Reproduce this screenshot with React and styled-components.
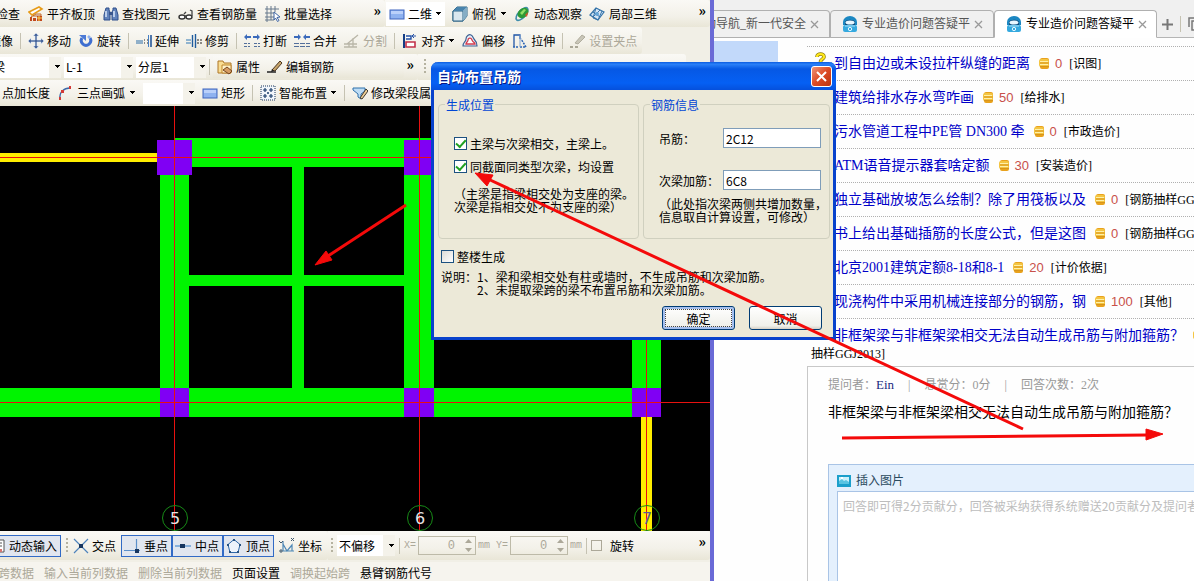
import styled, { createGlobalStyle, css } from 'styled-components';

const GlobalStyle = createGlobalStyle`
  * { box-sizing: border-box; }
  body {
    margin: 0;
    overflow: hidden;
    background: #fff;
    color: #000;
    font: 12px/16px "Liberation Serif", "Noto Sans CJK SC", sans-serif;
  }
  button, input, select, textarea { font: inherit; color: inherit; margin: 0; }
`;

const Desktop = styled.div`
  position: relative;
  display: grid;
  grid-template-columns: minmax(0, 714fr) minmax(0, 480fr);
  height: 100vh;
  overflow: hidden;
`;

/* ---------- drawing program ---------- */

const CadWindow = styled.section`
  display: flex;
  flex-direction: column;
  min-width: 0;
  overflow: hidden;
  background: #ece9d8;
  border-right: 4px solid #6a6ad6;
  font-family: "Noto Sans CJK SC", sans-serif;
`;

const ToolRow = styled.div`
  display: flex;
  flex: none;
  height: ${(p) => p.$h || 26}px;
  overflow: hidden;
  background: #f1efe6;
`;

const Strip = styled.div`
  display: flex;
  align-items: center;
  gap: ${(p) => p.$gap || 7}px;
  flex: ${(p) => (p.$w ? `0 0 ${p.$w}px` : '1 1 0')};
  min-width: 0;
  padding: 0 4px 0 ${(p) => p.$pad || 0}px;
  overflow: hidden;
  white-space: nowrap;
  background: linear-gradient(#faf9f5, #f3f1e9 60%, #e9e6d7);
  border-radius: 0 3px 3px 0;
`;

// first entries run off the left edge of the window
const Scrolled = styled.span`
  display: flex;
  flex: none;
  margin-left: -${(p) => p.$by}px;
`;

const ToolButton = styled.button`
  display: inline-flex;
  align-items: center;
  flex: none;
  gap: ${(p) => p.$gap || 3}px;
  height: 22px;
  padding: 0;
  border: 0;
  background: none;
  white-space: nowrap;
  color: ${(p) => (p.disabled ? '#aca899' : '#000')};
  svg { flex: none; }
  ${(p) => p.$white && css`
    height: 24px;
    padding: 0 3px;
    background: #fff;
  `}
  ${(p) => p.$pressed && css`
    padding: 0 3px 0 2px;
    background: #e1e6ef;
    border: 1px solid #316ac5;
  `}
`;

const Separator = styled.i`
  flex: none;
  width: 1px;
  height: 16px;
  background: #c5c2b2;
`;

const Grip = styled.i`
  flex: none;
  width: 2px;
  height: 16px;
  background: repeating-linear-gradient(#b5b2a0 0 2px, transparent 2px 4px);
`;

const More = styled.button`
  align-self: flex-start;
  margin-left: auto;
  padding: 0;
  border: 0;
  background: none;
  font-size: 14px;
  font-weight: bold;
  line-height: 20px;
`;

const ComboBox = styled.label`
  display: flex;
  align-items: center;
  flex: 0 0 ${(p) => p.$w}px;
  height: 21px;
  background: linear-gradient(90deg, #fff calc(100% - 12px), #f4f2ea 0);
  select {
    flex: 1;
    min-width: 0;
    padding: 0 0 0 2px;
    border: 0;
    outline: 0;
    background: none;
    appearance: none;
    height: 20px;
    line-height: 18px;
  }
`;

const Canvas = styled.div`
  flex: 1;
  min-height: 0;
  overflow: hidden;
  background: #000;
  svg { display: block; }
`;

const SnapBar = styled(ToolRow)`
  height: 31px;
  padding-bottom: 2px;
`;

const CommandBar = styled(ToolRow)`
  height: 19px;
  background: #f6f4ee;
  align-items: flex-end;
  gap: 10px;
  button { height: 16px; }
`;

const Snaps = styled.div`
  display: flex;
`;

const Offsets = styled.div`
  display: flex;
  gap: 6px;
  flex: none;
`;

const Coordinate = styled.label`
  display: flex;
  align-items: center;
  flex: none;
  gap: 2px;
  color: #aca899;
  font: 10px "Liberation Mono", monospace;
`;

const Spinner = styled.span`
  display: flex;
  align-items: center;
  width: 58px;
  height: 19px;
  padding-right: 3px;
  border: 1px solid #bdbaa8;
  input {
    flex: 1;
    min-width: 0;
    padding: 0 10px 0 0;
    border: 0;
    background: none;
    text-align: right;
    font-size: 12px;
    color: #aca899;
  }
`;

const EmptyTick = styled.input`
  appearance: none;
  width: 11px;
  height: 11px;
  border: 1px solid #aca899;
`;

const TickLabel = styled.label`
  display: flex;
  align-items: center;
  gap: 8px;
`;

function Arrow() {
  return <svg width="7" height="4" viewBox="0 0 7 4"><path d="M1 0h5v1H5v1H4v1H3V2H2V1H1z" /></svg>;
}

const glyphs = {
  slab: <><path d="M1 6L11 1L14 3L4 9Z" fill="#fff" stroke="#e69b18" strokeWidth="1.6" /><path d="M3 11L8 8H13V10H5" fill="#d9e7f6" stroke="#c66a24" /><path d="M2 11h2v4H2zM5 12h3v3H5zM9 10h5v5H9z" fill="#c2491c" /><path d="M9 12h5M11 10v5" stroke="#ffd24d" /></>,
  binoculars: <><path d="M3 2h3v2l1 2v8H1V9zM10 2h3l2 7v5H9V6l1-2z" fill="#6384bb" stroke="#2f4f8c" /><path d="M3 5v6M11 5v6" stroke="#dbe7fa" strokeWidth="1.5" /><path d="M6 6h4v3H6z" fill="#39568d" /></>,
  glasses: <><ellipse cx="4" cy="11" rx="3" ry="2" fill="#fff" stroke="#333" strokeWidth="1.4" /><ellipse cx="11" cy="11" rx="3" ry="2" fill="#fff" stroke="#333" strokeWidth="1.4" /><path d="M6 10h3M14 10V5l-2-1M6 8l2-2" fill="none" stroke="#444" strokeWidth="1.3" /></>,
  select: <><path d="M2 0v16M6 0v14M10 0v6M0 3h14M0 7h9M0 11h9M0 14h9" stroke="#67788c" fill="none" /><path d="M9 6l6 5-3 .5 2 3-1.500 1-2-3.500-1.500 2z" fill="#fff" stroke="#3f65a3" /></>,
  move: <path d="M8 0l3 3H9v4h4V5l3 3-3 3V9H9v4h2l-3 3-3-3h2V9H3v2L0 8l3-3v2h4V3H5z" fill="#47659b" stroke="#e4ecf8" strokeWidth=".6" />,
  rotate: <><path d="M4 5a4.700 4.700 0 1 0 8 0" fill="none" stroke="#3f6fd0" strokeWidth="3" /><path d="M1 2h7v6z" fill="#4c7ad6" /><path d="M12 5l-2-2" stroke="#8fb0ee" strokeWidth="2.500" /></>,
  extend: <><path d="M0 8h7M0 10h7" stroke="#2c6ea8" /><path d="M8 7h1M8 10h1M11 7h1M11 10h1" stroke="#222" /><path d="M12.500 2v12" stroke="#447fc5" /><path d="M15 2v12" stroke="#174d93" strokeWidth="1.500" /></>,
  trim: <><path d="M0 7h5M0 10h5" stroke="#2c76b5" /><path d="M6.500 2v12M9.500 1v14" stroke="#1f5c9e" strokeWidth="1.400" /><path d="M11 7h2M14 7h2M11 10h2M14 10h2" stroke="#222" /></>,
  breakup: <><path d="M0 4l3-3v2h4v2H3v2zM16 4l-3-3v2H9v2h4v2z" fill="#3b6abb" /><path d="M0 10.500h6M10 10.500h6M0 13.500h6M10 13.500h6" stroke="#536f9b" strokeDasharray="3 1" /></>,
  merge: <><path d="M7 4L4 1v2H0v2h4v2zM9 4l3-3v2h4v2h-4v2z" fill="#3b6abb" /><path d="M0 10.500h16M0 13.500h16" stroke="#536f9b" strokeDasharray="5 1" /></>,
  split: <><path d="M0 11h13M0 14h13M3 11L14 2M9 14V5M5 14v-4" stroke="#b9b6a8" fill="none" strokeWidth="1.300" /></>,
  align: <><path d="M2 1v14" stroke="#153d86" strokeWidth="2" /><path d="M4 3h5v3H4" fill="#fff" stroke="#2451a6" strokeWidth="1.400" /><path d="M4 9h9v5H4z" fill="#fff" stroke="#c2324a" strokeWidth="1.600" /><path d="M14 3h-4l2-2M10 3l2 2" fill="none" stroke="#2451a6" /></>,
  offset: <><path d="M1 13c0-4 3-4 3-7s3-5 5-4 2 3 3 4 3 3 3 7z" fill="#e6edf7" stroke="#3f6394" strokeWidth="1.200" /><path d="M4 11c0-2 2-2 2-4s3-3 4 0 3 2 3 4z" fill="#fff" stroke="#d33e4f" strokeWidth="1.300" /></>,
  stretch: <><path d="M2 14V2h6v4" fill="none" stroke="#1f55a6" strokeWidth="1.300" /><path d="M1 14h5M8 14h6L9 6" fill="none" stroke="#2a64b5" strokeDasharray="2 1" strokeWidth="1.500" /><path d="M8 2v12" stroke="#7ea4d6" /></>,
  clamp: <><path d="M0 14h3M5 14h3" stroke="#a9a696" strokeWidth="2" /><path d="M5 10L12 2l3 2-7 7z" fill="#c9c6b8" stroke="#b0ad9e" /></>,
  flat: <><rect x="1" y="4" width="14" height="9" fill="#8fb2f0" stroke="#3e65bd" /><path d="M2 5h12v3H2z" fill="#bad0fa" /></>,
  cube: <><path d="M1 5l4-4h10v9l-4 5H1z" fill="#a9c9dc" stroke="#2b6285" /><path d="M1 5h10v10H1z" fill="#d9e7ef" stroke="#2b6285" /><path d="M1 5l4-4h10l-4 4z" fill="#4984ad" /><path d="M11 5l4-4v9l-4 5z" fill="#85adc5" /></>,
  orbit: <><ellipse cx="8" cy="8" rx="8" ry="3.500" transform="rotate(-48 8 8)" fill="none" stroke="#3e8dac" strokeWidth="1.600" /><ellipse cx="9" cy="7" rx="6" ry="4.500" transform="rotate(-40 9 7)" fill="#2d9938" /><path d="M6 7l4-4 2 1-4 5z" fill="#92df67" /><path d="M11 9l3-3-1 5z" fill="#d8502b" /></>,
  local: <><path d="M1 9l6-7 8 4-6 8z" fill="#d5e5f5" stroke="#3674a9" strokeWidth="1.200" /><path d="M4 6l7 5M4 11l7-7M7 2L4 12l5 2 4-9" fill="none" stroke="#3674a9" /><circle cx="8" cy="8" r="2" fill="#65a5d5" /></>,
  props: <><path d="M1 4V2h5l1 2h7v10H1z" fill="#f9dd93" stroke="#ae7627" /><path d="M5 6h9v8H5z" fill="#fff2c9" stroke="#bd842b" /><path d="M6 11l4-3 5 4-3 3z" fill="#d69c62" stroke="#754521" /></>,
  pen: <><path d="M0 13h9" stroke="#222" strokeWidth="1.500" /><path d="M5 11L13 2l2 2-7 8z" fill="#c6a46a" stroke="#4b3520" /><path d="M4 13l1-3 2 2z" fill="#222" /></>,
  arc: <><path d="M3 14C2 7 7 3 13 3" fill="none" stroke="#3d69a8" strokeWidth="1.400" /><path d="M2 12h2v3H2zM4 5h3v3H4zM12 1h2v3h-2z" fill="#d33a37" /></>,
  smart: <><rect x="1" y="1" width="14" height="14" fill="#f2f6fc" stroke="#17345c" strokeDasharray="1 1" /><path d="M5 3v4M3 5h4M11 3v4M9 5h4M5 9v4M3 11h4M11 9v4M9 11h4" stroke="#183c69" strokeWidth="1.200" /><path d="M8 7v2M7 8h2" stroke="#183c69" /></>,
  modify: <><path d="M1 3h12v3L9 9v5l-3-2V9L1 5z" fill="#bddcf5" stroke="#2e70ab" /><path d="M8 13l6-9 2 2-6 8z" fill="#efcf96" stroke="#3b362f" /></>,
  dynamic: <><path d="M8 2h6v12H8M6 5h6M6 8h6" fill="#fff" stroke="#555" /><path d="M6 11h6v3H6z" fill="#d7756f" /></>,
  cross: <><path d="M1 1l14 14M15 1L1 15" stroke="#4e83bc" strokeWidth="1.200" /><rect x="6" y="6" width="4" height="4" fill="#17365f" /></>,
  perp: <><path d="M12.500 1v14M0 12.500h16" stroke="#5b8fc9" strokeWidth="1.200" /><rect x="11" y="11" width="4" height="4" fill="#17365f" /></>,
  mid: <><path d="M0 8h16" stroke="#6a9fd6" strokeWidth="1.400" /><rect x="5" y="6" width="5" height="4" fill="#17365f" /></>,
  vertex: <><path d="M8 1.500l6 5-2 8H4l-2-8z" fill="#edf3fb" stroke="#2f68a8" /><path d="M7 1h2v2H7zM13 6h2v2h-2zM1 6h2v2H1zM3 13h2v2H3zM11 13h2v2h-2z" fill="#25517f" /></>,
  coord: <><path d="M4 3v10h11M4 6l4 7 5-6v6" fill="none" stroke="#4d87b6" strokeWidth="1.200" /><path d="M12 0l3 3M15 0l-3 3M0 3l2 2 2-2M1 12h2v2H1z" stroke="#415a70" fill="none" /></>,
};

function Icon({ name, ...rest }) {
  return <svg width="16" height="16" viewBox="0 0 16 16" aria-hidden="true" {...rest}>{glyphs[name]}</svg>;
}

function Tool({ icon, children, menu, ...rest }) {
  return (
    <ToolButton type="button" {...rest}>
      {icon && <Icon name={icon} />}
      {children}
      {menu && <Arrow />}
    </ToolButton>
  );
}

function Combo({ label, value, width }) {
  return (
    <ComboBox $w={width}>
      <select aria-label={label} defaultValue={value}><option>{value}</option></select>
      <Arrow />
    </ComboBox>
  );
}

function Toolbars() {
  return (
    <>
      <ToolRow $h={27}>
        <Strip $w={385} $gap={8}>
          <Scrolled $by={4}>检查</Scrolled>
          <Tool icon="slab">平齐板顶</Tool>
          <Tool icon="binoculars">查找图元</Tool>
          <Tool icon="glasses">查看钢筋量</Tool>
          <Tool icon="select">批量选择</Tool>
          <More>»</More>
        </Strip>
        <Strip $pad={1}>
          <Tool icon="flat" menu $white>二维</Tool>
          <Tool icon="cube" menu $gap={4}>俯视</Tool>
          <Tool icon="orbit" $gap={4}>动态观察</Tool>
          <Tool icon="local" $gap={4}>局部三维</Tool>
          <More>»</More>
        </Strip>
      </ToolRow>
      <ToolRow $h={27}>
        <Strip $w={642}>
          <Scrolled $by={11}>镜像</Scrolled>
          <Separator />
          <Tool icon="move">移动</Tool>
          <Tool icon="rotate">旋转</Tool>
          <Separator />
          <Tool icon="extend">延伸</Tool>
          <Tool icon="trim">修剪</Tool>
          <Separator />
          <Tool icon="breakup">打断</Tool>
          <Tool icon="merge">合并</Tool>
          <Tool icon="split" disabled>分割</Tool>
          <Separator />
          <Tool icon="align" menu>对齐</Tool>
          <Tool icon="offset">偏移</Tool>
          <Tool icon="stretch">拉伸</Tool>
          <Separator />
          <Tool icon="clamp" disabled>设置夹点</Tool>
        </Strip>
      </ToolRow>
      <ToolRow>
        <Strip $w={418} $gap={3}>
          <Scrolled $by={9}><Combo label="构件类型" value="梁" width={70} /></Scrolled>
          <Combo label="构件" value="L-1" width={69} />
          <Combo label="分层" value="分层1" width={70} />
          <Separator />
          <Strip $pad={4}>
            <Tool icon="props">属性</Tool>
            <Tool icon="pen">编辑钢筋</Tool>
          </Strip>
          <More>»</More>
        </Strip>
        <Strip $w={268} $pad={6}>
          <Grip />
          <More>»</More>
        </Strip>
      </ToolRow>
      <ToolRow>
        <Strip $pad={2}>
          <Tool>点加长度</Tool>
          <Tool icon="arc" menu $gap={4}>三点画弧</Tool>
          <Combo label="半径" value="" width={52} />
          <Tool icon="flat">矩形</Tool>
          <Separator />
          <Tool icon="smart" menu>智能布置</Tool>
          <Separator />
          <Tool icon="modify">修改梁段属性</Tool>
        </Strip>
      </ToolRow>
    </>
  );
}

const axes = [
  { x: 174, name: '5', top: 0 },
  { x: 419, name: '6', top: 0 },
  { x: 646, name: '7', top: 230 },
];

function Plan() {
  return (
    <Canvas>
      <svg width="710" height="425" viewBox="0 106 710 425" shapeRendering="crispEdges">
        <path d="M0 153h160v9H0zM641 417h11v114h-11z" fill="#ffee00" />
        <path d="M174 138h300v29H174zM160 170h29v220h-29zM404 170h30v220h-30zM292 167h12v222h-12zM189 275h215v11H189zM0 388h661v29H0zM632 300h29v90h-29z" fill="#00f400" />
        <path d="M157 140h35v35h-35zM404 140h35v35h-35zM160 388h29v29h-29zM404 388h30v29h-30zM632 388h29v29h-29z" fill="#8000f4" />
        <path d="M0 157.500h640M0 402.500h710" stroke="#e81010" />
        {axes.map((a) => (
          <g key={a.name}>
            <path d={`M${a.x + 0.5} ${106 + a.top}V531`} stroke="#e81010" />
            <circle cx={a.x + 1} cy="518" r="12.500" fill="none" stroke="#178a17" shapeRendering="auto" />
            <text x={a.x + 1} y="524" textAnchor="middle" fontFamily="DejaVu Sans" fontSize="16" fill={a.name === '7' ? '#5a5a92' : '#e4e4e4'}>{a.name}</text>
          </g>
        ))}
      </svg>
    </Canvas>
  );
}

function Offset({ axis }) {
  return (
    <Coordinate>
      {axis}=
      <Spinner>
        <input defaultValue="0" disabled />
        <svg width="7" height="13" viewBox="0 0 7 13" fill="#aca899"><path d="M0 4l3.500-4L7 4zM0 9h7l-3.500 4z" /></svg>
      </Spinner>
      mm
    </Coordinate>
  );
}

function StatusBars() {
  return (
    <>
      <SnapBar>
        <Strip $w={328} $gap={5}>
          <Scrolled $by={13}><Tool icon="dynamic" $pressed>动态输入</Tool></Scrolled>
          <Grip />
          <Tool icon="cross">交点</Tool>
          <Snaps>
            <Tool icon="perp" $pressed $gap={4}>垂点</Tool>
            <Tool icon="mid" $pressed $gap={4}>中点</Tool>
            <Tool icon="vertex" $pressed $gap={4}>顶点</Tool>
          </Snaps>
          <Tool icon="coord">坐标</Tool>
        </Strip>
        <Strip $pad={3} $gap={4}>
          <Grip />
          <Combo label="偏移方式" value="不偏移" width={58} />
          <Separator />
          <Offsets>
            <Offset axis="X" />
            <Offset axis="Y" />
          </Offsets>
          <Separator />
          <TickLabel><EmptyTick type="checkbox" />旋转</TickLabel>
          <More>»</More>
        </Strip>
      </SnapBar>
      <CommandBar>
        <Scrolled $by={2}><Tool disabled>跨数据</Tool></Scrolled>
        <Tool disabled>输入当前列数据</Tool>
        <Tool disabled>删除当前列数据</Tool>
        <Tool>页面设置</Tool>
        <Tool disabled>调换起始跨</Tool>
        <Tool>悬臂钢筋代号</Tool>
      </CommandBar>
    </>
  );
}

/* ---------- browser ---------- */

const Browser = styled.section`
  display: flex;
  flex-direction: column;
  min-width: 0;
  overflow: hidden;
  background: #fefefe;
`;

const TabStrip = styled.nav`
  display: flex;
  flex: none;
  align-items: flex-end;
  height: 38px;
  overflow: hidden;
  background: #f0f0f0;
  box-shadow: inset 0 -1px #b5b5b5;
`;

const Tab = styled.div`
  display: flex;
  align-items: center;
  flex: 0 0 ${(p) => p.$w}px;
  gap: 4px;
  height: 28px;
  padding-left: ${(p) => (p.$cut ? 0 : 11)}px;
  white-space: nowrap;
  overflow: hidden;
  color: ${(p) => (p.$active ? '#000' : '#555')};
  background: ${(p) => (p.$active ? '#fff' : '#f0f0f0')};
  border: 1px solid #b0b0b0;
  border-bottom-color: ${(p) => (p.$active ? '#fff' : '#b0b0b0')};
  border-left-width: ${(p) => (p.$cut ? 0 : 1)}px;
  border-radius: ${(p) => (p.$cut ? '0 4px 0 0' : '4px 4px 0 0')};
`;

const TabButton = styled.button`
  display: flex;
  padding: 0;
  border: 0;
  background: none;
`;

const TabTools = styled.div`
  display: flex;
  align-items: center;
  gap: 7px;
  height: 28px;
  padding-left: 5px;
`;

const Page = styled.main`
  display: grid;
  grid-template-columns: 64px minmax(0, 1fr);
  column-gap: 29px;
  flex: 1;
  min-height: 0;
  overflow: hidden;
`;

const Side = styled.aside`
  height: 80px;
  margin-top: 3px;
  background: #c2d9fa;
`;

const Content = styled.div`
  display: flex;
  flex-direction: column;
  min-width: 0;
  padding-top: 8px;
`;

const QuestionList = styled.ul`
  flex: none;
  height: 320px;
  margin: 0;
  padding: 0;
  list-style: none;
`;

const Question = styled.li`
  display: flex;
  align-items: center;
  height: 34px;
  padding-left: 8px;
  white-space: nowrap;
  overflow: hidden;
  border-top: 1px dotted #b0b0b0;
  a {
    margin: 0 9px 0 8px;
    font-size: 14px;
    color: #0000c8;
    text-decoration: none;
  }
  svg { flex: none; }
`;

const QuestionMark = styled.svg`
  align-self: flex-start;
  margin-top: 5px;
`;

const Points = styled.span`
  margin: 0 7px 0 5px;
  font: 13px "Liberation Sans", sans-serif;
  color: #c8504a;
`;

const CategoryTail = styled.div`
  margin-top: -6px;
  padding-left: 4px;
`;

const Detail = styled.article`
  display: flex;
  flex-direction: column;
  flex: 1;
  min-height: 0;
  padding: 10px 0 0 20px;
  border: 1px solid #c8c8c8;
  border-width: 1px 0 0 1px;
  h1 {
    margin: 10px 0 41px;
    font-size: 14px;
    font-weight: normal;
    line-height: 20px;
    white-space: nowrap;
  }
`;

const Meta = styled.p`
  display: flex;
  gap: 14px;
  margin: 0;
  white-space: nowrap;
  color: #999;
  a { color: #1a2a80; text-decoration: none; font-size: 13px; }
`;

const Answer = styled.form`
  display: flex;
  flex-direction: column;
  flex: 1;
  min-height: 0;
  padding: 8px 0 0 8px;
  background: #e4f0fd;
  border: 1px solid #a9c4e6;
  border-width: 1px 0 0 1px;
`;

const InsertImage = styled.button`
  display: flex;
  align-items: center;
  gap: 5px;
  padding: 0;
  border: 0;
  background: none;
  color: #2b4a5e;
`;

const AnswerText = styled.textarea`
  flex: 1;
  margin-top: 2px;
  padding: 6px 5px;
  border: 1px solid #a9c4e6;
  border-width: 1px 0 0 1px;
  outline: 0;
  resize: none;
  overflow: hidden;
  white-space: nowrap;
  font-family: "Noto Sans CJK SC", sans-serif;
  &::placeholder { color: #bdbdbd; }
`;

const questions = [
  ['到自由边或未设拉杆纵缝的距离', 0, '[识图]'],
  ['建筑给排水存水弯咋画', 50, '[给排水]'],
  ['污水管道工程中PE管 DN300 牵', 0, '[市政造价]'],
  ['ATM语音提示器套啥定额', 30, '[安装造价]'],
  ['独立基础放坡怎么绘制？除了用筏板以及', 0, '[钢筋抽样GGJ2013]'],
  ['书上给出基础插筋的长度公式，但是这图', 0, '[钢筋抽样GGJ2013]'],
  ['北京2001建筑定额8-18和8-1', 20, '[计价依据]'],
  ['现浇构件中采用机械连接部分的钢筋，钢', 100, '[其他]'],
  ['非框架梁与非框架梁相交无法自动生成吊筋与附加箍筋？', 5, '[钢筋'],
];

function Coin() {
  return (
    <svg width="11" height="11" viewBox="0 0 11 11">
      <rect x="1" y="0" width="9" height="11" rx="2" fill="#e9a21c" />
      <rect x="0" y="1" width="10" height="8" rx="2" fill="#f4c542" />
      <path d="M1 3.500h8M1 6.500h8" stroke="#fff0a8" />
      <path d="M1 5h9M1 8.500h9" stroke="#d8951a" />
    </svg>
  );
}

function Mark() {
  return (
    <QuestionMark width="11" height="16" viewBox="0 0 11 16">
      <path d="M2 5C2 1 9 1 9 5c0 2-3.500 2-3.500 5M5.500 12v3" fill="none" stroke="#8a7a10" strokeWidth="3.600" />
      <path d="M2 5C2 1 9 1 9 5c0 2-3.500 2-3.500 5M5.500 12v3" fill="none" stroke="#ffe81c" strokeWidth="2.200" />
    </QuestionMark>
  );
}

function Favicon() {
  return (
    <svg width="16" height="16" viewBox="0 0 16 16">
      <path d="M1 9V6a7 6 0 0 1 14 0v3z" fill="#1b87c2" />
      <path d="M3 6c1-3 9-3 10 0v4H3z" fill="#0d4f80" />
      <ellipse cx="8" cy="6.500" rx="4.500" ry="2" fill="#e8f7ff" />
      <rect x="1" y="9" width="14" height="7" rx="2" fill="#35a9df" />
      <path d="M3 10h10" stroke="#a8e2fa" />
      <circle cx="8" cy="13" r="1.700" fill="none" stroke="#e3f7ff" />
    </svg>
  );
}

function CloseTab() {
  return (
    <TabButton type="button" aria-label="关闭">
      <svg width="9" height="9" viewBox="0 0 9 9" stroke="#999" strokeWidth="1.300"><path d="M1 1l7 7M8 1L1 8" /></svg>
    </TabButton>
  );
}

function BrowserWindow() {
  return (
    <Browser>
      <TabStrip>
        <Tab $w={116} $cut><Scrolled $by={10}>动导航_新一代安全</Scrolled><CloseTab /></Tab>
        <Tab $w={164}><Favicon />专业造价问题答疑平<CloseTab /></Tab>
        <Tab $w={163} $active><Favicon />专业造价问题答疑平<CloseTab /></Tab>
        <TabTools>
          <TabButton type="button" aria-label="新标签">
            <svg width="11" height="11" viewBox="0 0 11 11" stroke="#777" strokeWidth="2"><path d="M5.500 0v11M0 5.500h11" /></svg>
          </TabButton>
          <Separator />
          <TabButton type="button" aria-label="窗口">
            <svg width="14" height="14" viewBox="0 0 14 14" fill="none" stroke="#777" strokeWidth="1.500"><path d="M1 10V1h10M4 4h9v9H4z" /></svg>
          </TabButton>
        </TabTools>
      </TabStrip>
      <Page>
        <Side />
        <Content>
          <QuestionList>
            {questions.map(([title, points, tag]) => (
              <Question key={title}>
                <Mark />
                <a href="#question">{title}</a>
                <Coin />
                <Points>{points}</Points>
                {tag}
              </Question>
            ))}
            <CategoryTail>抽样GGJ2013]</CategoryTail>
          </QuestionList>
          <Detail>
            <Meta>
              <span>提问者：<a href="#user">Ein</a></span>
              <span>|</span>
              <span>悬赏分：0分</span>
              <span>|</span>
              <span>回答次数：2次</span>
            </Meta>
            <h1>非框架梁与非框架梁相交无法自动生成吊筋与附加箍筋？</h1>
            <Answer>
              <InsertImage type="button">
                <svg width="14" height="12" viewBox="0 0 14 12">
                  <rect width="14" height="12" fill="#1b9fcb" />
                  <path d="M2 2h10v7H2z" fill="#cbf1fb" />
                  <path d="M2 6l3-2 2 2 2-1 3 2v2H2z" fill="#59c4e2" />
                  <path d="M4 2h2v2H4z" fill="#fff" />
                </svg>
                插入图片
              </InsertImage>
              <AnswerText aria-label="回答" placeholder="回答即可得2分贡献分，回答被采纳获得系统赠送20贡献分及提问者" />
            </Answer>
          </Detail>
        </Content>
      </Page>
    </Browser>
  );
}

/* ---------- dialog ---------- */

const Dialog = styled.div`
  position: absolute;
  left: 431px;
  top: 62px;
  width: 405px;
  background: #ece9d8;
  border: 3px solid #0842cc;
  border-top: 0;
  border-radius: 7px 7px 0 0;
  font-family: "Noto Sans CJK SC", sans-serif;
  line-height: 13px;
`;

const TitleBar = styled.header`
  display: flex;
  align-items: center;
  justify-content: space-between;
  height: 28px;
  margin: 0 -3px;
  padding: 0 4px 0 6px;
  border-radius: 7px 7px 0 0;
  background: linear-gradient(#0a5be0, #2a80f8 8%, #0658e4 25%, #0560f4 75%, #0550dc);
  color: #fff;
  font-size: 14px;
  font-weight: bold;
  text-shadow: 1px 1px #0a1883;
`;

const CloseButton = styled.button`
  display: grid;
  place-items: center;
  width: 21px;
  height: 21px;
  padding: 0;
  border: 1px solid #fff;
  border-radius: 3px;
  background: linear-gradient(135deg, #ef9478, #dc4a24 50%, #b93410);
`;

const DialogBody = styled.div`
  padding: 8px 3px 7px 4px;
`;

const Groups = styled.div`
  display: grid;
  grid-template-columns: 201px 1fr;
  gap: 4px;
`;

const Group = styled.fieldset`
  height: 141px;
  min-width: 0;
  margin: 0;
  padding: 0 0 0 15px;
  border: 1px solid #d0d0bf;
  border-radius: 4px;
  white-space: nowrap;
  legend {
    margin-left: -9px;
    padding: 0 1px;
    color: #0046d5;
  }
`;

const Check = styled.label`
  display: flex;
  align-items: center;
  gap: 3px;
  height: 23px;
  input {
    appearance: none;
    flex: none;
    width: 13px;
    height: 13px;
    border: 1px solid #1c5180;
    background: linear-gradient(135deg, #dcdcd7, #fff);
  }
  input:checked {
    background: #fff;
    display: grid;
    place-items: center;
  }
  input:checked::before {
    content: '';
    width: 8px;
    height: 4px;
    border: solid #21a121;
    border-width: 0 0 2px 2px;
    transform: rotate(-48deg) translate(1px, -1px);
  }
`;

const Checks = styled.div`
  margin-top: 21px;
`;

const Field = styled.label`
  display: grid;
  grid-template-columns: 64px 98px;
  align-items: center;
  height: 20px;
  margin-top: 22px;
  input {
    height: 20px;
    min-width: 0;
    padding: 0 2px;
    border: 1px solid #7f9db9;
    background: #fff;
    outline: 0;
  }
`;

const Fields = styled.div`
  margin-top: -5px;
`;

const Note = styled.p`
  margin: ${(p) => p.$top}px 0 0;
`;

const WholeBuilding = styled.div`
  margin: 6px 3px 0;
`;

const Remarks = styled.div`
  display: grid;
  grid-template-columns: 36px 1fr;
  margin: 2px 3px 0;
  white-space: nowrap;
  p { margin: 0; }
`;

const Actions = styled.footer`
  display: flex;
  justify-content: flex-end;
  gap: 14px;
  margin-top: 10px;
  padding-right: 8px;
`;

const DialogButton = styled.button`
  width: 73px;
  height: 24px;
  padding: 0;
  border: 1px solid #003c74;
  border-radius: 3px;
  background: linear-gradient(#fff, #f0f0ea 85%, #d6d0c5);
  ${(p) => p.$default && css`
    box-shadow: inset 0 0 0 2px #a5bfee;
    outline: 1px dotted #444;
    outline-offset: -4px;
  `}
`;

function RebarDialog() {
  return (
    <Dialog role="dialog" aria-labelledby="dialog-title">
      <TitleBar>
        <span id="dialog-title">自动布置吊筋</span>
        <CloseButton type="button" aria-label="关闭">
          <svg width="11" height="11" viewBox="0 0 11 11" stroke="#fff" strokeWidth="2"><path d="M1 1l9 9M10 1l-9 9" /></svg>
        </CloseButton>
      </TitleBar>
      <DialogBody>
        <Groups>
          <Group>
            <legend>生成位置</legend>
            <Checks>
              <Check><input type="checkbox" defaultChecked />主梁与次梁相交，主梁上。</Check>
              <Check><input type="checkbox" defaultChecked />同截面同类型次梁，均设置</Check>
            </Checks>
            <Note $top={9}>（主梁是指梁相交处为支座的梁。<br />次梁是指相交处不为支座的梁）</Note>
          </Group>
          <Group>
            <legend>钢筋信息</legend>
            <Fields>
              <Field>吊筋：<input defaultValue="2C12" /></Field>
              <Field>次梁加筋：<input defaultValue="6C8" /></Field>
            </Fields>
            <Note $top={7}>（此处指次梁两侧共增加数量，<br />信息取自计算设置，可修改）</Note>
          </Group>
        </Groups>
        <WholeBuilding>
          <Check><input type="checkbox" />整楼生成</Check>
        </WholeBuilding>
        <Remarks>
          <span>说明：</span>
          <div>
            <p>1、梁和梁相交处有柱或墙时，不生成吊筋和次梁加筋。</p>
            <p>2、未提取梁跨的梁不布置吊筋和次梁加筋。</p>
          </div>
        </Remarks>
        <Actions>
          <DialogButton type="button" $default>确定</DialogButton>
          <DialogButton type="button">取消</DialogButton>
        </Actions>
      </DialogBody>
    </Dialog>
  );
}

// red pen marks drawn over both windows
const Marks = styled.svg`
  position: absolute;
  left: 0;
  top: 0;
  pointer-events: none;
`;

export default function App() {
  return (
    <Desktop>
      <GlobalStyle />
      <CadWindow>
        <Toolbars />
        <Plan />
        <StatusBars />
      </CadWindow>
      <BrowserWindow />
      <RebarDialog />
      <Marks width="1194" height="581" viewBox="0 0 1194 581" fill="#f40a0a" stroke="#f40a0a">
        <path d="M406 205L328 256M1023 429L488 179M842 438L1148 435" fill="none" strokeWidth="3" />
        <path d="M315 265l11-14 6 9zM475 173l18 2-6 11zM1163 434l-17-5v11z" strokeWidth="1" />
      </Marks>
    </Desktop>
  );
}
